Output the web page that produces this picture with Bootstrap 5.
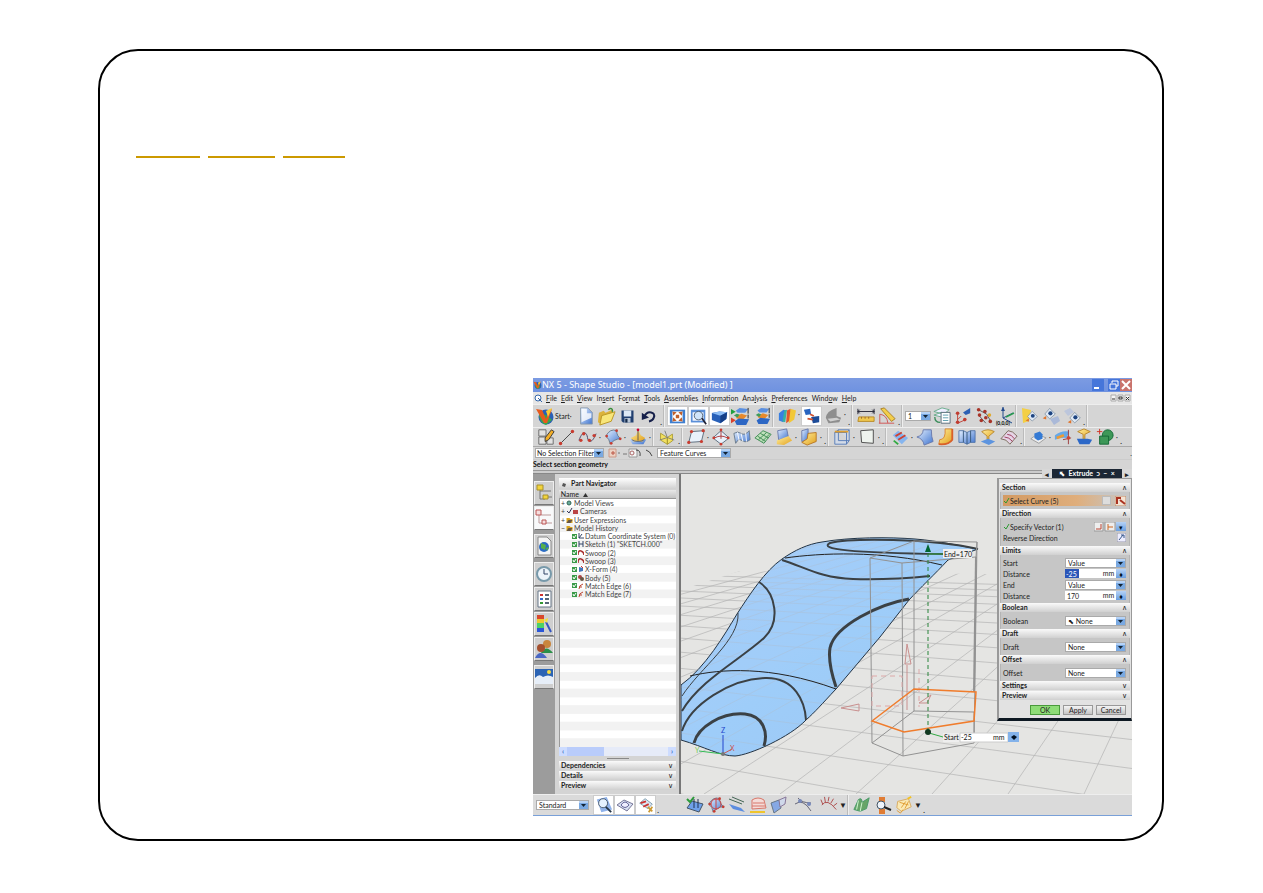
<!DOCTYPE html>
<html lang="en">
<head>
<meta charset="utf-8">
<meta name="viewport" content="width=device-width, initial-scale=1">
<title>NX 5 - Shape Studio</title>
<link href="https://cdn.jsdelivr.net/npm/bootstrap@5.3.0/dist/css/bootstrap.min.css" rel="stylesheet">
<style>
body{background:#fff;font-family:Lato,"Liberation Sans",sans-serif}
.slide{margin:49px 99px 52px 98px;border:2px solid #000;border-radius:40px;padding:105px 30px 23px 36px}
.rule{height:2px;background:#c90;width:64px}
.rule.wide{width:67px}.rule.slim{width:62px}
.app{margin:220px 0 0 397px;background:#d5d5d5;font-size:7px;line-height:8px;color:#222}
.app button,.app select,.app input{font:inherit;color:inherit;border-radius:0}
.app button{padding:0;border:0;background:none}
.titlebar{height:14px;background:linear-gradient(#7c9be2,#6f92e0);color:#fff;font:9px/14px "Noto Sans",sans-serif}
.winbtn{width:12px;height:12px;line-height:10px}
.winbtn svg,.ic svg,.tab svg{display:block}
.menubar{height:12px;background:#e6e6e6}
.menubar a{color:#222;text-decoration:none}
.menubar u{text-underline-offset:1px}
.menus{gap:4px}
.tools{height:23px;border-top:1px solid #eee;padding-left:2px}
.tools.second{height:20px;border-bottom:1px solid #aaa}
.app .start{width:40px}
.app .ic{width:21px;flex:none;display:flex;justify-content:center;align-items:center;height:20px}
.app .on{background:#fff;outline:1px solid #ccc;outline-offset:-1px}
.dd,.end,.sep{width:4px;flex:none;height:100%;text-align:center;line-height:18px}
.end{align-self:flex-end;height:8px;line-height:6px;font-weight:700}
.sep{border-left:1px solid #bbb;box-shadow:inset 1px 0 #eee;width:4px}
.app select{appearance:none;border:1px solid #aaa;height:10px;line-height:8px;padding:0 9px 0 2px;background:#fff url("data:image/svg+xml,%3Csvg xmlns='http://www.w3.org/2000/svg' width='9' height='8'%3E%3Crect width='9' height='8' fill='%2379a9e2'/%3E%3Cpath d='M0 0h9v2H0z' fill='%23b5d2f6'/%3E%3Cpath d='M2 3h5L4.500 6z' fill='%23123'/%3E%3C/svg%3E") right 0 center no-repeat;border-radius:0}
.app .w-layer{width:26px}.app .w-filter{width:69px;padding-left:1px}.app .w-rule{width:74px}
.filterbar{height:13px;border-bottom:1px solid #ccc;padding-left:2px}
.prompt{height:10px;font-weight:700;color:#111}
.ledge{height:4px;border-top:1px solid #999;border-bottom:1px solid #888;background:#ccc}
.tabs{width:22px;flex:none;background:#9c9c9c;padding:7px 1px 0}
.app .tab{width:20px;height:24px;background:#cfcfcf;border:1px solid #eee;border-bottom-color:#777;margin-bottom:1px;display:flex;align-items:center;justify-content:center}
.app .tab.gap4{margin-bottom:4px}
.nav-pane{width:126px;flex:none;background:#d4d4d4;padding:4px 3px 3px 4px;border-right:2px solid #777}
.pane-title{height:11px;background:linear-gradient(#fff,#d0d0d0);font-weight:700;line-height:10px}
.tree-head{height:9px;background:linear-gradient(#e8e8e8,#c4c4c4);border-bottom:1px solid #999;margin-top:1px}
.tree{height:248px;display:grid;grid-template-rows:repeat(30,1fr);background:linear-gradient(#fff 50%,#f2f2f2 50%) 0 0/100% calc(100%/15);border-left:1px solid #999}
.tree li{display:flex;align-items:center;gap:1px;padding-left:1px;white-space:nowrap;color:#444}
.tree .kid{padding-left:12px}
.tree svg{display:block;flex:none}
.hscroll{height:9px;background:#e6ebf8;color:#36b}
.hscroll i{width:8px;background:#cddcff;text-align:center;font-style:normal;font-weight:700}
.hscroll b{width:37px;background:#b9ccfb}
.grip{width:22px;border-top:1px solid #888;margin:2px auto}
.fold{height:9px;margin-bottom:1px;background:linear-gradient(#fafafa,#d0d0d0);font-weight:700;padding:0 3px 0 2px;line-height:9px;color:#222}
.fold span{font-weight:400}
.scene{height:320px;background:#e5e5e3}
.scene>svg{width:100%;height:100%;display:block}
.dlg{right:0;top:-5px;width:135px}
.dlg-title{height:9px;margin-left:45px;background:#1c2735;color:#fff;font-weight:700}
.app .dlg-title button{width:10px;background:#d8d8d8;color:#222;line-height:8px}
.dlg-body{background:#e2e2e2;border:1px solid #999;border-width:1px 1px 3px 2px;border-bottom-color:#0d1822;padding:4px 1px 0 1px;height:243px}
.grp{background:#c6c6c6;border:1px solid #b4b4b4;border-width:0 1px;padding:3px 3px 3px 2px}
.grp.tight{padding-top:2px;padding-bottom:2px}
.dlg .fold{margin:0}
.dlg .fold.next{margin-top:1px}
.line{height:11px;display:flex;align-items:center}
.line label,.line>span{flex:1}
.line select{width:61px}
.app .num{width:36px;height:9px;border:0;background:#fff;padding:0 2px}
.line .unit{flex:none;width:15px;height:9px;background:#fff;text-align:center}
.app .blue{width:10px;height:9px;background:linear-gradient(#b5d2f6,#6b9fe0);line-height:8px;color:#012}
.line.pick{background:linear-gradient(90deg,#d39a62,#dfae7c 60%,#c6c6c6)}
.app .num.hot{background:#2b56b8;color:#fff;width:14px;padding:0 1px}
.line .pad{flex:none;width:22px;height:9px;background:#fff}
.line .mini{width:9px;height:9px;flex:none;background:#ddd;outline:1px solid #bbb;outline-offset:-1px}
.foot{gap:3px;padding:5px 4px 0 0}
.app .foot button{width:30px;height:10px;border:1px solid #999;background:linear-gradient(#f4f4f4,#c4c4c4);line-height:8px}
.app .foot .ok{background:#8edd77;border-color:#4a9a3c}
.statusbar{height:22px;border-top:1px solid #eee;border-bottom:1px solid #79a0d8;background:#dadada;padding-left:3px}
.statusbar select{width:53px}
.statusbar .more{width:8px;font-size:8px}
</style>
</head>
<body>
<svg width="0" height="0" class="position-absolute" aria-hidden="true">
<defs>
<linearGradient id="gb" x2="1" y2="1"><stop stop-color="#e4f0ff"/><stop offset="1" stop-color="#3f74cf"/></linearGradient>
<linearGradient id="gy" x2="1" y2="1"><stop stop-color="#fff0a0"/><stop offset="1" stop-color="#e2a01c"/></linearGradient>
<linearGradient id="gs" x2="1" y2="1"><stop stop-color="#a9cdf8"/><stop offset=".5" stop-color="#9fcdf9"/><stop offset="1" stop-color="#9cc6f2"/></linearGradient>
<symbol id="logo" viewBox="0 0 20 20"><circle cx="11" cy="11" r="7.500" fill="#2a5fb5"/><path d="M4 9Q10 6 17 14L11 19Q5 17 4 9" fill="#39a84a"/><path d="M1 3l6 1 4 9 3-8 3-2-5 14h-3z" fill="#e65a1d"/><path d="M11 5l6-3-4 9z" fill="#f8cd34"/></symbol>
<symbol id="new" viewBox="0 0 20 20"><path d="M4 1h8l5 5v13H4z" fill="url(#gb)" stroke="#89a"/><path d="M5 2h6v5h5v5L5 17z" fill="#fff" opacity=".8"/></symbol>
<symbol id="open" viewBox="0 0 20 20"><path d="M2 6l5-2 2 2 7-3v6L4 18 1 16z" fill="#dcb33c"/><path d="M5 9l14-4-4 10-12 4z" fill="#f8e67a" stroke="#b99624"/><path d="M12 3c2-3 5-1 4 2" fill="none" stroke="#3a8c3a" stroke-width="1.500"/></symbol>
<symbol id="save" viewBox="0 0 20 20"><path d="M2 2h16v16H4l-2-2z" fill="#203f70"/><path d="M5 2h10v8H5z" fill="#dce8f5"/><path d="M6 12h8v6H6z" fill="#b9c7d8"/><path d="M7 13h3v5H7z" fill="#152a4a"/></symbol>
<symbol id="undo" viewBox="0 0 20 20"><path d="M4 11C8 2 19 5 16 12Q15 16 10 17" fill="none" stroke="#16204a" stroke-width="2.500"/><path d="M1 6v9l9-3z" fill="#16204a"/></symbol>
<symbol id="fit" viewBox="0 0 20 20"><path d="M1 2h18v16H1z" fill="#3f7fd0"/><path d="M4 4h12v12H4z" fill="#fff"/><path d="M4 4l5 1-4 4zM16 4l-5 1 4 4zM4 16l5-1-4-4zM16 16l-5-1 4-4zM8 8h4v4H8z" fill="#c0602c"/></symbol>
<symbol id="zoomw" viewBox="0 0 20 20"><path d="M1 2h17v15H1z" fill="#5a8fd8"/><path d="M3 5h13v10H3z" fill="#f0f5ff"/><circle cx="10" cy="9" r="5" fill="#cfe4fa" stroke="#456"/><path d="M14 12l5 7" stroke="#223" stroke-width="2"/></symbol>
<symbol id="shade" viewBox="0 0 20 20"><path d="M1 6l9-2 9 1-1 8-7 5-10-4z" fill="#2860b8"/><path d="M1 6l9-2 9 1-8 4z" fill="#8dbdf5"/><path d="M11 9l8-4-1 8-7 5z" fill="#153f88"/></symbol>
<symbol id="stack" viewBox="0 0 20 20"><path d="M5 4l4-3 9 1-3 4H7z" fill="#5a8fe0"/><path d="M5 10l6-3 6 2-4 4-7-1z" fill="#e8892c"/><path d="M4 15l4-3 11 1-3 6H6z" fill="#2c66c4"/><path d="M3 9l3-2 3 1-2 3z" fill="#3c9c5c"/><path d="M18 1v6M18 8v4" stroke="#222"/></symbol>
<symbol id="play" viewBox="0 0 20 20"><path d="M0 2l5 3-5 3z" fill="#22a040"/><path d="M0 11l5 3-5 3z" fill="#d8402c"/></symbol>
<symbol id="rain" viewBox="0 0 20 20"><path d="M1 7l5-4 3 1-3 13-5-2z" fill="#3a7fe0"/><path d="M7 4l3-1-2 14-3-1z" fill="#38b0a0"/><path d="M10 4l4-2 1 12-6 4z" fill="#e0582c"/><path d="M14 2l6 2-2 10-6 4z" fill="#f2c838"/></symbol>
<symbol id="swap" viewBox="0 0 20 20"><path d="M1 3l7-1 1 6-6 1z" fill="#2864c0"/><path d="M9 11l9-1v7l-7 1z" fill="#1e4c98"/><path d="M8 8l4 2M11 14l-6-1" stroke="#d05030" stroke-width="2"/></symbol>
<symbol id="hat" viewBox="0 0 20 20"><path d="M2 12q1-8 12-11v9l5 2-2 5-12 1z" fill="#8e8e8e"/><path d="M4 13l10-1 4 2-11 2z" fill="#d0d0d0"/></symbol>
<symbol id="ruler" viewBox="0 0 20 20"><path d="M1 5h18M1 2v6M19 2v6M3 3L1 5l2 2M17 3l2 2-2 2" stroke="#223" fill="none"/><path d="M2 11h17v5H1z" fill="#f0c850" stroke="#b58724"/><path d="M5 11v2M9 11v2M13 11v2" stroke="#963"/></symbol>
<symbol id="angle" viewBox="0 0 20 20"><path d="M3 2l4-1 12 12-4 3z" fill="#f2ce4c" stroke="#a77c20"/><path d="M1 18h17M2 18V8q8 1 9 10" fill="none" stroke="#d05050"/></symbol>
<symbol id="layers" viewBox="0 0 20 20"><path d="M1 5l9-4 8 2-6 5zM1 9l8-3 9 1-5 5z" fill="#eef" stroke="#6a8"/><path d="M9 6h10v12H9z" fill="#fff" stroke="#567"/><path d="M11 9h6M11 12h6M11 15h6" stroke="#59a"/><path d="M2 11q0 6 6 6" fill="none" stroke="#3a8c5a" stroke-width="1.500"/></symbol>
<symbol id="csys" viewBox="0 0 20 20"><path d="M4 18V8M4 18l9-4M4 14l4-4" stroke="#c03c30" fill="none"/><g fill="#c03c30"><circle cx="4" cy="7" r="2"/><circle cx="4" cy="17" r="2"/><circle cx="12" cy="14" r="2"/></g><path d="M10 6l8-5v6l-5 2z" fill="#2c60b4"/></symbol>
<symbol id="atoms" viewBox="0 0 20 20"><path d="M4 3l9 5 4 7M4 9l8 9" stroke="#555" fill="none"/><g fill="#a83428"><circle cx="4" cy="3" r="2"/><circle cx="5" cy="9" r="2"/><circle cx="11" cy="5" r="2"/><circle cx="12" cy="12" r="2"/><circle cx="17" cy="16" r="2"/><circle cx="7" cy="15" r="2"/></g><circle cx="16" cy="9" r="2" fill="#e0a92c"/></symbol>
<symbol id="axes" viewBox="0 0 20 20"><path d="M8 1v11l10-5M8 12l9 5" stroke="#234a8c" stroke-width="1" fill="none"/><path d="M8 1l-2 4h4z" fill="#234a8c"/><path d="M11 11l8-4" stroke="#2a9a50" stroke-width="1.500"/></symbol>
<symbol id="eye" viewBox="0 0 20 20"><path d="M4 10L11 2l8 8-8 7z" fill="#dfe9f5" stroke="#789"/><circle cx="12" cy="9" r="3" fill="#1d4480"/><path d="M1 16l5-3v5z" fill="#e0742c"/></symbol>
<symbol id="sketch" viewBox="0 0 20 20"><path d="M2 2h8v7H2zM2 10h8v8H2zM11 11h7v7h-7z" fill="#e2e2e2" stroke="#666"/><path d="M9 11l7-9 3 2-6 9-4 2z" fill="#f2ae28" stroke="#333"/></symbol>
<symbol id="lin" viewBox="0 0 20 20"><path d="M3 17L17 3" stroke="#333"/><g fill="#c83c30"><circle cx="3" cy="17" r="2"/><circle cx="17" cy="3" r="2"/></g></symbol>
<symbol id="spl" viewBox="0 0 20 20"><path d="M1 13C5 2 9 4 10 10s5 6 9-4" fill="none" stroke="#446"/><g fill="#c83c30"><circle cx="3" cy="13" r="1.800"/><circle cx="6" cy="6" r="1.800"/><circle cx="12" cy="13" r="1.800"/><circle cx="17" cy="8" r="1.800"/></g></symbol>
<symbol id="patch" viewBox="0 0 20 20"><path d="M2 9Q7 0 14 3q0 6 5 9-8 0-12 6Q6 12 2 9" fill="url(#gb)" stroke="#678"/><g fill="#c83c30"><circle cx="3" cy="9" r="1.500"/><circle cx="14" cy="3" r="1.500"/><circle cx="18" cy="12" r="1.500"/><circle cx="8" cy="17" r="1.500"/></g></symbol>
<symbol id="cone" viewBox="0 0 20 20"><path d="M1 13q9-7 18 0l-3 5H4z" fill="url(#gb)"/><path d="M10 1l3 7 5 3-3 4H5l-3-4 6-3z" fill="url(#gy)"/><path d="M3 13q7 4 14 0" fill="none" stroke="#568"/><path d="M10 2v12" stroke="#555"/><circle cx="10" cy="2" r="1.500" fill="#c03"/></symbol>
<symbol id="datum" viewBox="0 0 20 20"><path d="M3 5l8 5v8l-8-5zM11 10l6-4v8l-6 4z" fill="#f2e060" stroke="#a89830"/><path d="M8 2l3 8 8 3M2 13l9-3" stroke="#777" fill="none"/></symbol>
<symbol id="quad" viewBox="0 0 20 20"><path d="M5 4l14-1-3 12-14 1z" fill="#e9f1fb" stroke="#567"/><g fill="#c83c30"><circle cx="5" cy="4" r="1.800"/><circle cx="18" cy="3" r="1.800"/><circle cx="16" cy="15" r="1.800"/><circle cx="2" cy="16" r="1.800"/></g></symbol>
<symbol id="swp" viewBox="0 0 20 20"><path d="M1 11L10 3l9 8-9 7z" fill="#e9f1fb" stroke="#567"/><path d="M10 2v10M3 11q7-4 14 0" fill="none" stroke="#a33"/><g fill="#c83c30"><circle cx="2" cy="11" r="1.500"/><circle cx="10" cy="2" r="1.500"/><circle cx="18" cy="11" r="1.500"/><circle cx="10" cy="18" r="1.500"/></g></symbol>
<symbol id="warp" viewBox="0 0 20 20"><path d="M1 6q4-3 8 0t9-3l1 10q-5 4-9 1t-7 3z" fill="url(#gb)" stroke="#678"/><path d="M5 5l2 10M9 6l2 9M14 5l1 10" stroke="#fff"/></symbol>
<symbol id="mesh" viewBox="0 0 20 20"><path d="M1 11L10 3l9 4-8 10z" fill="#bfe0bb" stroke="#3a8a50"/><path d="M4 9l9 6M7 6l9 5M5 13l9-8M9 15l8-8" stroke="#3a8a50"/></symbol>
<symbol id="sheet" viewBox="0 0 20 20"><path d="M3 3l10-2 2 10-11 2z" fill="url(#gb)" stroke="#67a"/><path d="M2 14l13-5 4 5-9 5-8-1z" fill="url(#gy)"/></symbol>
<symbol id="solid" viewBox="0 0 20 20"><path d="M2 3l7-2v12l-7 2z" fill="url(#gb)" stroke="#67a"/><path d="M9 6l9-1v10l-10 4-6-3 6-4z" fill="url(#gy)" stroke="#b57420"/></symbol>
<symbol id="cage" viewBox="0 0 20 20"><path d="M2 5l4-3h12l-3 3zM2 5h13v13H2zM18 2v12l-3 4M6 2v12h12" fill="#cfdffa" fill-opacity=".5" stroke="#557ab8"/><path d="M2 4h15" stroke="#e0a030" stroke-width="2"/></symbol>
<symbol id="plane" viewBox="0 0 20 20"><path d="M3 3l14-1v15L4 16z" fill="#eef3ee" stroke="#444"/></symbol>
<symbol id="blend" viewBox="0 0 20 20"><path d="M2 8l6-5 11 8-7 7z" fill="#86b5ef"/><path d="M5 9l7-4M8 13l8-5" stroke="#d04030" stroke-width="2"/><path d="M3 14l5 4" stroke="#3a4" stroke-width="2"/></symbol>
<symbol id="swoosh" viewBox="0 0 20 20"><path d="M1 10Q8 8 8 2h9q0 8 2 13l-10 4q-1-7-8-9" fill="url(#gb)" stroke="#67a"/></symbol>
<symbol id="bend" viewBox="0 0 20 20"><path d="M9 1h8v12q-4 6-15 5l1-5q7 0 6-12" fill="url(#gy)" stroke="#d9822a"/><path d="M17 1v12q-4 6-15 5" fill="none" stroke="#d9602a" stroke-width="2"/></symbol>
<symbol id="book" viewBox="0 0 20 20"><path d="M1 3h5l4 2 4-2h5v13h-5l-4 2-4-2H1z" fill="url(#gb)" stroke="#57a"/><path d="M6 3v13M10 5v13M14 3v13" stroke="#357"/></symbol>
<symbol id="lamp" viewBox="0 0 20 20"><path d="M3 4q7-4 14 0l-6 5v4h-2V9z" fill="url(#gy)" stroke="#b88428"/><path d="M2 15l8-3 8 3-7 4z" fill="#5d94df"/></symbol>
<symbol id="ext" viewBox="0 0 20 20"><path d="M3 4l7-3 7 3-6 3v6H9V7z" fill="url(#gy)" stroke="#b88428"/><path d="M2 12h12l5 1-3 5H5z" fill="#2c68c8"/></symbol>
<symbol id="purp" viewBox="0 0 20 20"><path d="M1 12L9 3q5 0 10 6l-8 9q-4-6-10-6" fill="#e6d4e6" stroke="#765"/><path d="M5 10q5 0 9 5M8 7q5 0 8 5" fill="none" stroke="#935"/></symbol>
<symbol id="block" viewBox="0 0 20 20"><path d="M2 12l7-5 10 4-8 6z" fill="#eee" stroke="#999"/><path d="M6 6l6-2 3 3v5l-5 2-4-3z" fill="#347ad4"/></symbol>
<symbol id="trim" viewBox="0 0 20 20"><path d="M1 8q8-6 16-4l-3 7q-6-1-13 2z" fill="#65a8e8"/><path d="M3 11l8-3" stroke="#ec9a34" stroke-width="3"/><path d="M16 2v16M10 13l9-2" stroke="#933"/><circle cx="16" cy="11" r="2" fill="#c43"/></symbol>
<symbol id="bool" viewBox="0 0 20 20"><circle cx="13" cy="8" r="6" fill="#3d9858" stroke="#163"/><path d="M4 9h10v9H4z" fill="#3d9858" stroke="#163"/><path d="M1 4h6M4 1v6" stroke="#d03020"/></symbol>
<symbol id="lens" viewBox="0 0 20 20"><path d="M2 4l11-3 6 14-12 3z" fill="#8fb2ea"/><circle cx="9" cy="8" r="5" fill="#e4f1ff" stroke="#456"/><path d="M12 12l6 6" stroke="#234" stroke-width="2"/></symbol>
<symbol id="comb" viewBox="0 0 20 20"><path d="M2 10q6-8 16 5M3 9L1 4M6 7L5 1M9 6l1-5M12 8l3-5M15 11l4-3" fill="none" stroke="#a44"/></symbol>
<symbol id="wave" viewBox="0 0 20 20"><path d="M1 15L6 4q4-3 4 3l8-5-3 12-7 3z" fill="#67a568" stroke="#496"/><path d="M10 7L8 17M6 5L4 15" stroke="#dfd"/></symbol>
<symbol id="cheese" viewBox="0 0 20 20"><path d="M3 6l12-3 3 9-11 5-5-4z" fill="#fae9b4" stroke="#d8a85a"/><path d="M2 16l4 3 3-4M12 6l-5 7M15 6l-4 8M5 7l10 3" stroke="#df9a2c" fill="none"/><path d="M14 3l4-2" stroke="#f3c11e" stroke-width="2"/></symbol>
<symbol id="glasses" viewBox="0 0 20 20"><path d="M3 8l6-5 8 6-5 5z" fill="#dce6f4" stroke="#79a"/><path d="M4 8l6-2M7 12l6-3" stroke="#c33" stroke-width="2"/><path d="M12 12l5 5M17 12l-4 6" stroke="#c93" stroke-width="2"/></symbol>
<symbol id="chk" viewBox="0 0 5 5"><path d="M0 0h5v5H0z" fill="#3a9a48"/><path d="M1 2l1 2 2-3" fill="none" stroke="#fff"/></symbol>
<symbol id="sw" viewBox="0 0 6 6"><path d="M0 5q0-5 3-4t3 4" fill="none" stroke="#a33" stroke-width="1.500"/></symbol>
<symbol id="me" viewBox="0 0 6 6"><path d="M1 6q0-4 4-5M1 4h3" fill="none" stroke="#b43"/></symbol>
<symbol id="fd" viewBox="0 0 6 6"><path d="M0 1h3l1 1h2v4H0z" fill="#d9a520"/><path d="M2 3h4L4 6H0z" fill="#654"/></symbol>
</defs>
</svg>

<main class="slide">
  <div class="d-flex gap-2" aria-hidden="true"><span class="rule"></span><span class="rule wide"></span><span class="rule slim"></span></div>

  <section class="app">
    <header class="titlebar d-flex align-items-center">
      <svg width="9" height="10"><use href="#logo"/></svg>
      <span class="flex-grow-1 text-nowrap">NX 5 - Shape Studio - [model1.prt (Modified) ]</span>
      <button class="winbtn me-1" aria-label="Minimize"><svg width="12" height="12"><path d="M0 0h12v12H0z" fill="#4676da"/><path d="M2 9h5" stroke="#fff" stroke-width="2"/></svg></button>
      <button class="winbtn" aria-label="Restore"><svg width="12" height="12"><path d="M0 0h12v12H0z" fill="#4676da"/><path d="M4 4V2h6v5H8M2 5h6v5H2z" fill="none" stroke="#fff"/></svg></button>
      <button class="winbtn" aria-label="Close"><svg width="12" height="12"><path d="M0 0h12v12H0z" fill="#c9736c"/><path d="M2 2l8 8M10 2l-8 8" stroke="#fff" stroke-width="2"/></svg></button>
    </header>

    <nav class="menubar d-flex align-items-center">
      <svg class="me-1" width="9" height="9"><circle cx="5" cy="4" r="3" fill="#fff" stroke="#36a"/><path d="M5 4l4 4" stroke="#36a"/></svg>
      <div class="menus d-flex flex-grow-1 text-nowrap">
      <a href="#"><u>F</u>ile</a><a href="#"><u>E</u>dit</a><a href="#"><u>V</u>iew</a><a href="#">In<u>s</u>ert</a><a href="#">Fo<u>r</u>mat</a><a href="#"><u>T</u>ools</a><a href="#"><u>A</u>ssemblies</a><a href="#"><u>I</u>nformation</a><a href="#">Ana<u>l</u>ysis</a><a href="#"><u>P</u>references</a><a href="#">Wind<u>o</u>w</a><a href="#"><u>H</u>elp</a></div>
      <svg width="22" height="8"><path d="M1 1h5v6H1zM8 1h5v6H8zM15 1h5v6h-5z" fill="#f4f4f4" stroke="#aaa"/><path d="M2 5h3M9 3h3v2H9zM16 3l3 3M19 3l-3 3" stroke="#333" fill="none"/></svg>
    </nav>

    <div class="tools d-flex align-items-center">
      <button class="start d-flex align-items-center"><svg width="20" height="20"><use href="#logo"/></svg>Start·</button>
      <button class="ic" aria-label="New"><svg width="18" height="18"><use href="#new"/></svg></button>
      <button class="ic" aria-label="Open"><svg width="19" height="19"><use href="#open"/></svg></button>
      <button class="ic" aria-label="Save"><svg width="15" height="15"><use href="#save"/></svg></button>
      <button class="ic" aria-label="Undo"><svg width="16" height="16"><use href="#undo"/></svg></button>
      <span class="end">.</span><span class="sep"></span>
      <button class="ic on" aria-label="Fit"><svg width="17" height="17"><use href="#fit"/></svg></button>
      <button class="ic on" aria-label="Zoom"><svg width="17" height="17"><use href="#zoomw"/></svg></button>
      <button class="ic on" aria-label="Shaded"><svg width="17" height="17"><use href="#shade"/></svg></button>
      <button class="ic" aria-label="Show and hide"><svg width="19" height="19"><use href="#stack"/><use href="#play"/></svg></button>
      <button class="ic" aria-label="Hide"><svg width="18" height="18"><use href="#stack"/></svg></button>
      <span class="sep"></span>
      <button class="ic" aria-label="Analysis"><svg width="18" height="18"><use href="#rain"/></svg></button><span class="dd">·</span>
      <button class="ic on" aria-label="Toggle"><svg width="18" height="18"><use href="#swap"/></svg></button>
      <button class="ic" aria-label="Section"><svg width="18" height="18"><use href="#hat"/></svg></button><span class="dd">·</span>
      <span class="end">.</span><span class="sep"></span>
      <button class="ic" aria-label="Distance"><svg width="18" height="18"><use href="#ruler"/></svg></button>
      <button class="ic" aria-label="Angle"><svg width="18" height="18"><use href="#angle"/></svg></button>
      <span class="end">.</span><span class="sep"></span>
      <select class="w-layer" aria-label="Work layer"><option>1</option></select>
      <button class="ic" aria-label="Layers"><svg width="18" height="18"><use href="#layers"/></svg></button>
      <button class="ic" aria-label="WCS"><svg width="18" height="18"><use href="#csys"/></svg></button>
      <button class="ic" aria-label="Points"><svg width="18" height="18"><use href="#atoms"/></svg></button>
      <button class="ic" aria-label="Origin"><svg width="20" height="20"><use href="#axes"/><text x="1" y="19" font-size="5" font-weight="700">(0,0,0)</text></svg></button>
      <span class="sep"></span>
      <button class="ic" aria-label="Show"><svg width="18" height="18"><path d="M1 1l9 2-2 11-6 2z" fill="#f3cf45"/><use href="#eye" x="4" y="3" width="13" height="13"/></svg></button>
      <button class="ic" aria-label="Look"><svg width="18" height="18"><path d="M8 12l8-3 2 5-6 4z" fill="#aab9d8"/><use href="#eye" width="14" height="14"/></svg></button>
      <button class="ic" aria-label="Look back"><svg width="18" height="18"><path d="M1 4l6-3 4 4-6 4z" fill="#bcc6dc"/><use href="#eye" x="4" y="4" width="14" height="14"/></svg></button>
      <span class="end">.</span><span class="sep"></span>
    </div>

    <div class="tools second d-flex align-items-center">
      <button class="ic" aria-label="Sketch"><svg width="18" height="18"><use href="#sketch"/></svg></button>
      <button class="ic" aria-label="Line"><svg width="17" height="17"><use href="#lin"/></svg></button>
      <button class="ic" aria-label="Spline"><svg width="19" height="19"><use href="#spl"/></svg></button><span class="dd">·</span>
      <button class="ic" aria-label="Patch"><svg width="18" height="18"><use href="#patch"/></svg></button><span class="dd">·</span>
      <button class="ic" aria-label="Revolve"><svg width="18" height="18"><use href="#cone"/></svg></button><span class="dd">·</span>
      <span class="sep"></span>
      <button class="ic" aria-label="Datum"><svg width="17" height="17"><use href="#datum"/></svg></button>
      <span class="end">.</span><span class="sep"></span>
      <button class="ic" aria-label="Four point surface"><svg width="18" height="18"><use href="#quad"/></svg></button><span class="dd">·</span>
      <button class="ic" aria-label="Swoop"><svg width="18" height="18"><use href="#swp"/></svg></button>
      <button class="ic" aria-label="Ruled"><svg width="18" height="18"><use href="#warp"/></svg></button>
      <button class="ic" aria-label="Mesh"><svg width="18" height="18"><use href="#mesh"/></svg></button>
      <button class="ic" aria-label="Sheet"><svg width="18" height="18"><use href="#sheet"/></svg></button><span class="dd">·</span>
      <button class="ic" aria-label="Solid"><svg width="18" height="18"><use href="#solid"/></svg></button><span class="dd">·</span>
      <span class="end">.</span><span class="sep"></span>
      <button class="ic" aria-label="Bounding"><svg width="18" height="18"><use href="#cage"/></svg></button><span class="dd">·</span>
      <button class="ic" aria-label="Plane"><svg width="18" height="18"><use href="#plane"/></svg></button><span class="dd">·</span>
      <span class="end">.</span><span class="sep"></span>
      <button class="ic" aria-label="Blend"><svg width="18" height="18"><use href="#blend"/></svg></button><span class="dd">·</span>
      <button class="ic" aria-label="Swept"><svg width="18" height="18"><use href="#swoosh"/></svg></button>
      <button class="ic" aria-label="Bend"><svg width="18" height="18"><use href="#bend"/></svg></button>
      <button class="ic" aria-label="Sections"><svg width="18" height="18"><use href="#book"/></svg></button>
      <button class="ic" aria-label="Project"><svg width="18" height="18"><use href="#lamp"/></svg></button>
      <button class="ic" aria-label="Offset"><svg width="18" height="18"><use href="#purp"/></svg></button>
      <span class="end">.</span><span class="sep"></span>
      <button class="ic" aria-label="Block"><svg width="18" height="18"><use href="#block"/></svg></button><span class="dd">·</span>
      <button class="ic" aria-label="Trim"><svg width="18" height="18"><use href="#trim"/></svg></button>
      <button class="ic" aria-label="Extrude"><svg width="18" height="18"><use href="#ext"/></svg></button>
      <button class="ic" aria-label="Unite"><svg width="18" height="18"><use href="#bool"/></svg></button><span class="dd">·</span>
      <span class="end">.</span>
    </div>

    <div class="filterbar d-flex align-items-center">
      <select class="w-filter" aria-label="Selection filter"><option>No Selection Filter</option></select>
      <svg class="ms-1" width="45" height="10"><path d="M1 1h7v8H1z" fill="#ecd2c4" stroke="#c98"/><path d="M3 5h4M5 3v4" stroke="#b54"/><path d="M10 5h2M15 6h4" stroke="#777"/><path d="M21 1h8v8h-8z" fill="#f4f4f4" stroke="#999"/><circle cx="24" cy="5" r="2" fill="none" stroke="#a66"/><path d="M28 2q5 0 4 6M38 2q4 1 6 6" fill="none" stroke="#444"/></svg>
      <select class="w-rule ms-1" aria-label="Curve rule"><option>Feature Curves</option></select>
      <span class="ms-auto">.</span>
    </div>
    <div class="prompt">Select section geometry</div>
    <div class="ledge"></div>

    <div class="d-flex position-relative">
      <div class="tabs">
        <button class="tab" aria-label="Assembly Navigator"><svg width="18" height="22"><path d="M5 7v10h5M5 9H16M10 15h7" stroke="#777" fill="none"/><path d="M2 3h6v5H2zM8 13h5v4H8z" fill="#f2d43c" stroke="#a8902a"/></svg></button>
        <button class="tab gap4 bg-light" aria-label="Part Navigator"><svg width="18" height="22"><path d="M4 8v8h4M6 8h10M11 16h6" stroke="#b99" fill="none"/><path d="M1 3h5v5H1zM7 13h4v4H7z" fill="#f5dede" stroke="#b55"/></svg></button>
        <button class="tab gap4" aria-label="Internet Explorer"><svg width="18" height="20"><path d="M3 1h9l4 4v14H3z" fill="#f4f4f4" stroke="#888"/><circle cx="9" cy="11" r="5" fill="#2c6cc4"/><path d="M6 7l5 2-1 5-4-2zM11 12l3-1-2 4z" fill="#57b04a"/></svg></button>
        <button class="tab" aria-label="History"><svg width="18" height="20"><circle cx="9" cy="10" r="7" fill="#eef4fa" stroke="#79a" stroke-width="2"/><path d="M9 5v5h4" fill="none" stroke="#346"/></svg></button>
        <button class="tab" aria-label="System Materials"><svg width="18" height="20"><path d="M3 2h13v16H3z" fill="#fff" stroke="#678"/><path d="M5 5h3v2H5z" fill="#c33"/><path d="M5 9h3v2H5z" fill="#36c"/><path d="M5 13h3v2H5z" fill="#393"/><path d="M10 6h4M10 10h4M10 14h4" stroke="#567" stroke-width="2"/></svg></button>
        <button class="tab" aria-label="Palettes"><svg width="18" height="20"><path d="M2 1h7v4H2z" fill="#d9482c"/><path d="M2 5h7v4H2z" fill="#edc92e"/><path d="M2 9h7v5H2z" fill="#4cd266"/><path d="M2 14h7v4H2z" fill="#2a56d8"/><path d="M11 8l5 10" stroke="#3354c0" stroke-width="2"/><path d="M9 6l4-2-1 5z" fill="#f3e13c"/></svg></button>
        <button class="tab gap4" aria-label="Roles"><svg width="18" height="20"><circle cx="12" cy="5" r="4" fill="#c9863e"/><path d="M6 14q5-9 12 0z" fill="#2a9048"/><circle cx="6" cy="9" r="4" fill="#a4502e"/><path d="M0 19q5-10 12 0z" fill="#4a68c4"/></svg></button>
        <button class="tab" aria-label="Scene"><svg width="18" height="20"><path d="M0 2h18v15H0z" fill="#2b64b4"/><path d="M0 11q4-5 8-1 5-3 10 0v7H0z" fill="#e6eef8"/><circle cx="14" cy="5" r="2" fill="#f8dc42"/></svg></button>
      </div>

      <div class="nav-pane">
        <div class="pane-title"><svg width="12" height="7"><path d="M4 2l3 1-1 3-3-1z" fill="#555"/></svg>Part Navigator</div>
        <div class="tree-head">&nbsp;Name &nbsp;<svg width="5" height="4"><path d="M0 4h5L2.500 0z" fill="#333"/></svg></div>
        <ul class="tree list-unstyled mb-0">
          <li>+<svg width="7" height="6"><circle cx="3" cy="3" r="2" fill="#6a9" stroke="#365"/></svg>Model Views</li>
          <li>+<svg width="13" height="6"><path d="M1 3l2 2 3-5" fill="none" stroke="#335"/><path d="M7 2h5v4H7z" fill="#b44"/></svg>Cameras</li>
          <li>+<svg width="7" height="6"><use href="#fd"/></svg>User Expressions</li>
          <li>−<svg width="7" height="6"><use href="#fd"/></svg>Model History</li>
          <li class="kid"><svg width="5" height="5"><use href="#chk"/></svg><svg width="6" height="6"><path d="M1 0v5h5M1 5l3-4" stroke="#346" fill="none"/></svg>Datum Coordinate System (0)</li>
          <li class="kid"><svg width="5" height="5"><use href="#chk"/></svg><svg width="6" height="6"><path d="M1 0v6M5 0v6M1 3h4" stroke="#346" fill="none"/></svg>Sketch (1) "SKETCH.000"</li>
          <li class="kid"><svg width="5" height="5"><use href="#chk"/></svg><svg width="6" height="6"><use href="#sw"/></svg>Swoop (2)</li>
          <li class="kid"><svg width="5" height="5"><use href="#chk"/></svg><svg width="6" height="6"><use href="#sw"/></svg>Swoop (3)</li>
          <li class="kid"><svg width="5" height="5"><use href="#chk"/></svg><svg width="6" height="6"><path d="M1 1l4 1v3l-4 1z" fill="#47b"/><path d="M3 0l2 2" stroke="#c33"/></svg>X-Form (4)</li>
          <li class="kid"><svg width="5" height="5"><use href="#chk"/></svg><svg width="6" height="6"><circle cx="2" cy="2" r="2" fill="#a44"/><circle cx="4" cy="4" r="2" fill="#654"/></svg>Body (5)</li>
          <li class="kid"><svg width="5" height="5"><use href="#chk"/></svg><svg width="6" height="6"><use href="#me"/></svg>Match Edge (6)</li>
          <li class="kid"><svg width="5" height="5"><use href="#chk"/></svg><svg width="6" height="6"><use href="#me"/></svg>Match Edge (7)</li>
        </ul>
        <div class="hscroll d-flex"><i>‹</i><b></b><span class="flex-grow-1"></span><i>›</i></div>
        <div class="grip"></div>
        <div class="fold d-flex justify-content-between">Dependencies<span>∨</span></div>
        <div class="fold d-flex justify-content-between">Details<span>∨</span></div>
        <div class="fold d-flex justify-content-between">Preview<span>∨</span></div>
      </div>

      <div class="scene flex-grow-1">
        <svg viewBox="681 474 451 320" preserveAspectRatio="xMinYMin slice" font-size="7">
          <clipPath id="floor"><path d="M681 590L740 571 1132 576V794H681z"/></clipPath>
          <g clip-path="url(#floor)"><path id="grid" fill="none" stroke="#b4b4b4" stroke-width="1" opacity=".7"/></g>
          <path id="skin" d="M681 685C705 668 725 634 737 614 750 594 765 571 782 559 795 550 808 544 822 542 850 537 890 537 915 539 940 541 960 546 978 549L948 560C935 574 920 588 909 600L880 637 836 689C822 704 815 712 806 720 790 737 750 755 735 756 720 756 705 747 681 740z" fill="url(#gs)" stroke="#234" stroke-width="1"/>
          <clipPath id="on"><use href="#skin"/></clipPath>
          <g clip-path="url(#on)"><use href="#grid" opacity=".35"/></g>
          <g fill="none" stroke="#222">
            <path d="M690 676C720 669 770 665 836 689M785 558C820 553 880 550 942 565" stroke-width="1"/>
            <g stroke="#3b4145" stroke-width="2">
              <path d="M759 582C776 593 781 622 764 638 740 660 700 680 682 711"/>
              <path d="M738 613C740 640 700 668 682 696" stroke-width="1"/>
              <path d="M978 549C930 538 850 538 830 543 818 549 850 553 943 554"/>
              <path d="M682 731C690 705 730 679 765 678 795 677 805 702 806 720"/>
            </g>
            <path d="M782 560C805 567 820 578 853 579Q890 580 930 576" stroke="#3b4145" stroke-width="2"/>
            <path d="M909 599C880 604 835 625 830 648 828 660 832 675 836 687M694 743C698 727 722 712 745 714 764 716 768 733 764 746" stroke="#3b4145" stroke-width="3"/>
          </g>
          <g fill="none" stroke="#929292"><path d="M870 558L914 541 977 542 976 557 902 563zM870 558L872 743 903 756 974 743V712L914 711 872 743M914 541V711M977 542L974 743M902 563L903 756" stroke-width="1"/><path d="M976 557L974 692" stroke-width="2"/></g>
          <path d="M872 676h30v30h-30zM919 669v38" fill="none" stroke="#dca8a8" stroke-dasharray="5 4"/>
          <path d="M907 710V665M905 664l2-20 4 20zM919 703l12-8-4 8zM841 708l18-4v7z" fill="none" stroke="#c9908f"/>
          <path d="M872 721L914 689 976 692 974 721 904 732z" fill="none" stroke="#f07c2c" stroke-width="1.500"/>
          <path d="M928 732V550" stroke="#28843a" stroke-dasharray="4 3" fill="none"/><path d="M925 552h6l-3-8z" fill="#063"/><path d="M929 554h14M929 733l14 4" stroke="#3a4"/>
          <circle cx="928" cy="732" r="3" fill="#103820"/>
          <path d="M723 754V735" stroke="#24c"/><path d="M723 754l-24-3" stroke="#3b5"/><path d="M723 754l9-5" stroke="#c55"/><circle cx="723" cy="754" r="2" fill="#777"/>
          <text x="721" y="733" fill="#24c">Z</text><text x="730" y="751" fill="#c55">X</text><text x="695" y="753" fill="#7c5">Y</text>
          <path d="M943 549h29v9h-29z" fill="#f0f0f0"/><text x="944" y="557" fill="#111">End=170</text>
          <path d="M943 733h17v9h-17z" fill="#eee"/><text x="944" y="740" fill="#111">Start</text>
          <path d="M960 733h48v9h-48z" fill="#fff" stroke="#ccc"/><text x="961" y="740" fill="#111">-25</text><text x="993" y="740" fill="#111">mm</text>
          <path d="M1008 732h11v10h-11z" fill="#83b2ea"/><path d="M1011 737l3-2 3 2-3 3z" fill="#012"/>
        </svg>
      </div>

      <form class="dlg position-absolute">
        <div class="dlg-title d-flex"><button type="button" aria-label="Scroll left">◂</button><span class="flex-grow-1 text-center">⬉ &nbsp;Extrude&nbsp; ↄ &nbsp;– &nbsp;×</span><button type="button" aria-label="Scroll right">▸</button></div>
        <div class="dlg-body">
          <div class="fold d-flex justify-content-between">Section<span>∧</span></div>
          <div class="grp"><div class="line pick"><svg width="7" height="7"><path d="M1 4l2 2 3-5" fill="none" stroke="#2a9a30"/></svg><span>Select Curve (5)</span><span class="mini"></span><svg class="ms-1" width="11" height="10"><path d="M0 0h11v10H0z" fill="#f4e4d4" stroke="#b86"/><path d="M2 8V2h4M5 4l5 4" stroke="#a32" fill="none" stroke-width="2"/></svg></div></div>
          <div class="fold d-flex justify-content-between">Direction<span>∧</span></div>
          <div class="grp">
            <div class="line"><svg width="7" height="7"><path d="M1 4l2 2 3-5" fill="none" stroke="#2a9a30"/></svg><span>Specify Vector (1)</span><svg width="22" height="10"><path d="M0 0h9v9H0z" fill="#eee" stroke="#999"/><path d="M2 7h5V2" fill="none" stroke="#b43"/><path d="M11 0h10v9H11z" fill="#eee" stroke="#999"/><path d="M14 8V2M14 5h5" stroke="#c62"/></svg><button type="button" class="blue" aria-label="Vector type">▾</button></div>
            <div class="line"><span>Reverse Direction</span><svg width="9" height="9"><path d="M0 0h9v9H0z" fill="#eef" stroke="#99a"/><path d="M2 7l4-5M4 2h3v3" fill="none" stroke="#358"/></svg></div>
          </div>
          <div class="fold d-flex justify-content-between">Limits<span>∧</span></div>
          <div class="grp tight">
            <div class="line"><label for="st">Start</label><select id="st"><option>Value</option></select></div>
            <div class="line"><label for="d1">Distance</label><input id="d1" class="num hot" value="-25"><span class="pad"></span><span class="unit">mm</span><button type="button" class="blue" aria-label="Start options">♦</button></div>
            <div class="line"><label for="en">End</label><select id="en"><option>Value</option></select></div>
            <div class="line"><label for="d2">Distance</label><input id="d2" class="num" value="170"><span class="unit">mm</span><button type="button" class="blue" aria-label="End options">♦</button></div>
          </div>
          <div class="fold d-flex justify-content-between">Boolean<span>∧</span></div>
          <div class="grp"><div class="line"><label for="bo">Boolean</label><select id="bo"><option>⬉ None</option></select></div></div>
          <div class="fold d-flex justify-content-between">Draft<span>∧</span></div>
          <div class="grp"><div class="line"><label for="dr">Draft</label><select id="dr"><option>None</option></select></div></div>
          <div class="fold d-flex justify-content-between">Offset<span>∧</span></div>
          <div class="grp"><div class="line"><label for="of">Offset</label><select id="of"><option>None</option></select></div></div>
          <div class="fold d-flex justify-content-between">Settings<span>∨</span></div>
          <div class="fold next d-flex justify-content-between">Preview<span>∨</span></div>
          <div class="foot d-flex justify-content-end"><button type="button" class="ok">OK</button><button type="button">Apply</button><button type="button">Cancel</button></div>
        </div>
      </form>
    </div>

    <footer class="statusbar d-flex align-items-center">
      <select class="me-1" aria-label="Role"><option>Standard</option></select>
      <button class="ic on" aria-label="Inspect"><svg width="18" height="18"><use href="#lens"/></svg></button>
      <button class="ic on" aria-label="Shape"><svg width="18" height="18"><path d="M1 9l7-5 9 4-6 7z" fill="#d8e0f2" stroke="#779"/><path d="M5 9q4-6 8 0-4 5-8 0" fill="#eef" stroke="#669"/></svg></button>
      <button class="ic on" aria-label="Edges"><svg width="18" height="18"><use href="#glasses"/></svg></button>
      <span class="end">.</span>
      <button class="ic ms-4" aria-label="Examine"><svg width="18" height="18"><path d="M1 12l5-7 11 3-4 8z" fill="#6fa0ea" stroke="#456"/><path d="M1 3l3 3 4-5" stroke="#2a9a38" stroke-width="2" fill="none"/><path d="M8 3v9M12 3v9" stroke="#235"/></svg></button>
      <button class="ic" aria-label="Radius"><svg width="18" height="18"><use href="#patch"/><circle cx="9" cy="8" r="5" fill="none" stroke="#c44"/><path d="M9 2v12" stroke="#c44"/></svg></button>
      <button class="ic" aria-label="Reflection"><svg width="18" height="18"><path d="M1 3l13 5M4 1l12 5" stroke="#465"/><path d="M1 8l12 4 4 4-12-3z" fill="#5b8de0"/></svg></button>
      <button class="ic" aria-label="Draft analysis"><svg width="18" height="18"><path d="M3 4q6-4 12 0l2 8-14 1z" fill="#f4dcd8" stroke="#d8776a"/><path d="M4 7h11M3 10h13" stroke="#d8776a"/><path d="M1 16h15" stroke="#eec52e" stroke-width="2"/></svg></button>
      <button class="ic" aria-label="Distance gauge"><svg width="18" height="18"><path d="M1 7l8-3 2 8-7 5z" fill="#86a8e4" stroke="#678"/><path d="M9 4l7-3-1 7-5 3z" fill="#cfd8ea" stroke="#879"/></svg></button>
      <span class="sep border-0 shadow-none"></span>
      <button class="ic" aria-label="Continuity"><svg width="18" height="18"><path d="M0 8q8-6 16 7M3 2q4 5 13 5" fill="none" stroke="#667"/><circle cx="5" cy="5" r="2" fill="#78b"/><circle cx="14" cy="8" r="2" fill="#78b"/></svg></button>
      <span class="sep border-0 shadow-none"></span>
      <button class="ic" aria-label="Curvature comb"><svg width="18" height="18"><use href="#comb"/></svg></button><span class="more">▼</span>
      <span class="sep"></span>
      <button class="ic" aria-label="Highlight lines"><svg width="18" height="18"><use href="#wave"/></svg></button>
      <button class="ic" aria-label="Surface analysis"><svg width="19" height="19"><path d="M6 1h6v5H6zM6 13h6v5H6z" fill="#e07c34"/><circle cx="8" cy="9" r="4" fill="#eef4fb" stroke="#456"/><path d="M11 11l7 3" stroke="#222" stroke-width="2"/></svg></button>
      <button class="ic" aria-label="Face analysis"><svg width="18" height="18"><use href="#cheese"/></svg></button><span class="more">▼</span>
      <span class="end">.</span>
    </footer>
  </section>
</main>
<script>
// Perspective floor grid: one family fans out to a vanishing point, the other sinks slowly to the right.
let d = '';
for (let x = -1500; x < 1150; x += 76) d += `M${x} 794L1250 440`;
for (let h = 4; h < 300; h = h * 1.15 + 4) d += `M681 ${571 + h}L1132 ${571 + h * 1.35 + 12}`;
document.getElementById('grid').setAttribute('d', d);
</script>
<script src="https://cdn.jsdelivr.net/npm/bootstrap@5.3.0/dist/js/bootstrap.bundle.min.js"></script>
</body>
</html>
